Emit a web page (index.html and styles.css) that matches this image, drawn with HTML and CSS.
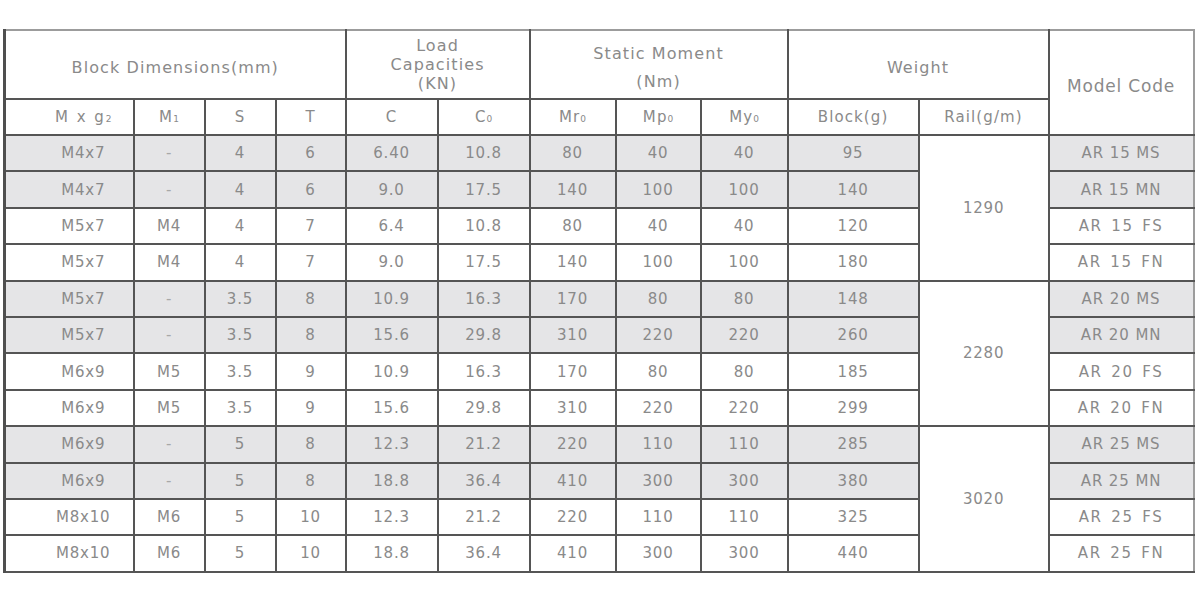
FILE: index.html
```html
<!DOCTYPE html>
<html>
<head>
<meta charset="utf-8">
<link rel="stylesheet" href="styles.css">
</head>
<body>
<table class="spec">
  <colgroup>
    <col class="c-mxg"><col class="c-m1"><col class="c-s"><col class="c-t">
    <col class="c-c"><col class="c-co">
    <col class="c-mr"><col class="c-mp"><col class="c-my">
    <col class="c-block"><col class="c-rail"><col class="c-model">
  </colgroup>
  <thead>
    <tr class="h1">
      <th colspan="4" class="group"><span class="lower">Block Dimensions(mm)</span></th>
      <th colspan="2" class="group load">Load<br>Capacities<br>(KN)</th>
      <th colspan="3" class="group static"><div class="static-in">Static Moment<br>(Nm)</div></th>
      <th colspan="2" class="group"><span class="lower">Weight</span></th>
      <th rowspan="2" class="model-h">Model Code</th>
    </tr>
    <tr class="h2">
      <th class="first mxg">M x g<span class="sb">2</span></th>
      <th>M<span class="sb">1</span></th>
      <th>S</th>
      <th>T</th>
      <th>C</th>
      <th>C<span class="sb">0</span></th>
      <th>Mr<span class="sb">0</span></th>
      <th>Mp<span class="sb">0</span></th>
      <th>My<span class="sb">0</span></th>
      <th>Block(g)</th>
      <th>Rail(g/m)</th>
    </tr>
  </thead>
  <tbody>
    <tr class="shade">
      <td class="first">M4x7</td><td class="dash">-</td><td>4</td><td>6</td>
      <td>6.40</td><td>10.8</td><td>80</td><td>40</td><td>40</td><td>95</td>
      <td rowspan="4" class="rail">1290</td>
      <td class="model">AR 15 MS</td>
    </tr>
    <tr class="shade">
      <td class="first">M4x7</td><td class="dash">-</td><td>4</td><td>6</td>
      <td>9.0</td><td>17.5</td><td>140</td><td>100</td><td>100</td><td>140</td>
      <td class="model">AR 15 MN</td>
    </tr>
    <tr>
      <td class="first">M5x7</td><td>M4</td><td>4</td><td>7</td>
      <td>6.4</td><td>10.8</td><td>80</td><td>40</td><td>40</td><td>120</td>
      <td class="model wide">AR 15 FS</td>
    </tr>
    <tr>
      <td class="first">M5x7</td><td>M4</td><td>4</td><td>7</td>
      <td>9.0</td><td>17.5</td><td>140</td><td>100</td><td>100</td><td>180</td>
      <td class="model wide">AR 15 FN</td>
    </tr>
    <tr class="shade">
      <td class="first">M5x7</td><td class="dash">-</td><td>3.5</td><td>8</td>
      <td>10.9</td><td>16.3</td><td>170</td><td>80</td><td>80</td><td>148</td>
      <td rowspan="4" class="rail">2280</td>
      <td class="model">AR 20 MS</td>
    </tr>
    <tr class="shade">
      <td class="first">M5x7</td><td class="dash">-</td><td>3.5</td><td>8</td>
      <td>15.6</td><td>29.8</td><td>310</td><td>220</td><td>220</td><td>260</td>
      <td class="model">AR 20 MN</td>
    </tr>
    <tr>
      <td class="first">M6x9</td><td>M5</td><td>3.5</td><td>9</td>
      <td>10.9</td><td>16.3</td><td>170</td><td>80</td><td>80</td><td>185</td>
      <td class="model wide">AR 20 FS</td>
    </tr>
    <tr>
      <td class="first">M6x9</td><td>M5</td><td>3.5</td><td>9</td>
      <td>15.6</td><td>29.8</td><td>310</td><td>220</td><td>220</td><td>299</td>
      <td class="model wide">AR 20 FN</td>
    </tr>
    <tr class="shade">
      <td class="first">M6x9</td><td class="dash">-</td><td>5</td><td>8</td>
      <td>12.3</td><td>21.2</td><td>220</td><td>110</td><td>110</td><td>285</td>
      <td rowspan="4" class="rail">3020</td>
      <td class="model">AR 25 MS</td>
    </tr>
    <tr class="shade">
      <td class="first">M6x9</td><td class="dash">-</td><td>5</td><td>8</td>
      <td>18.8</td><td>36.4</td><td>410</td><td>300</td><td>300</td><td>380</td>
      <td class="model">AR 25 MN</td>
    </tr>
    <tr>
      <td class="first">M8x10</td><td>M6</td><td>5</td><td>10</td>
      <td>12.3</td><td>21.2</td><td>220</td><td>110</td><td>110</td><td>325</td>
      <td class="model wide">AR 25 FS</td>
    </tr>
    <tr>
      <td class="first">M8x10</td><td>M6</td><td>5</td><td>10</td>
      <td>18.8</td><td>36.4</td><td>410</td><td>300</td><td>300</td><td>440</td>
      <td class="model wide">AR 25 FN</td>
    </tr>
  </tbody>
</table>
</body>
</html>
```

FILE: styles.css
```css
html, body {
  margin: 0;
  padding: 0;
  background: #ffffff;
}

body {
  font-family: "DejaVu Sans", "Liberation Sans", sans-serif;
  color: #8a8a8a;
}

.spec {
  border-collapse: collapse;
  table-layout: fixed;
  width: 1189px;
  margin: 29px 0 0 3px;
  font-size: 15px;
  letter-spacing: 0.8px;
  border-top: 2px solid #9c9c9c;
  border-right: 2px solid #9c9c9c;
  border-left: 3px solid #4f4f4f;
  border-bottom: 2px solid #555555;
}

.c-mxg { width: 129px; }
.c-m1 { width: 71px; }
.c-s { width: 71px; }
.c-t { width: 70px; }
.c-c { width: 92px; }
.c-co { width: 92px; }
.c-mr { width: 86px; }
.c-mp { width: 85px; }
.c-my { width: 87px; }
.c-block { width: 131px; }
.c-rail { width: 130px; }
.c-model { width: 145px; }

.spec th,
.spec td {
  border: 2px solid #555555;
  padding: 0;
  text-align: center;
  vertical-align: middle;
  font-weight: normal;
  white-space: nowrap;
  overflow: hidden;
}

.spec .first {
  padding-left: 28px;
}

.spec thead th {
  border-top-color: #9c9c9c;
}

.spec .h2 th {
  border-top-color: #555555;
}

.spec .model-h {
  border-right-color: #9c9c9c;
  font-size: 17px;
  letter-spacing: 0.8px;
  padding-top: 6px;
}

.h1 {
  height: 69px;
}

.h1 .group {
  font-size: 16px;
  letter-spacing: 1.1px;
}

.lower {
  display: inline-block;
  padding-top: 6px;
}

.h1 .load {
  line-height: 19px;
}

.static-in {
  line-height: 28px;
  padding-top: 6px;
}

.h2 {
  height: 36px;
}

.h2 th {
  font-size: 15px;
  letter-spacing: 1.1px;
}

.h2 .mxg {
  letter-spacing: 2px;
}

.sb {
  font-size: 9px;
  letter-spacing: 0;
}

.spec tbody tr {
  height: 36.4px;
}

.spec tbody tr.shade td {
  background: #e5e5e7;
}

.spec tbody tr.shade td.rail,
.spec td.rail {
  background: #ffffff;
}

.spec .model {
  border-right-color: #9c9c9c;
  letter-spacing: 0.9px;
}

.spec .model.wide {
  letter-spacing: 1.7px;
  word-spacing: 2px;
}

.dash {
  color: #a8a8a8;
}
```
